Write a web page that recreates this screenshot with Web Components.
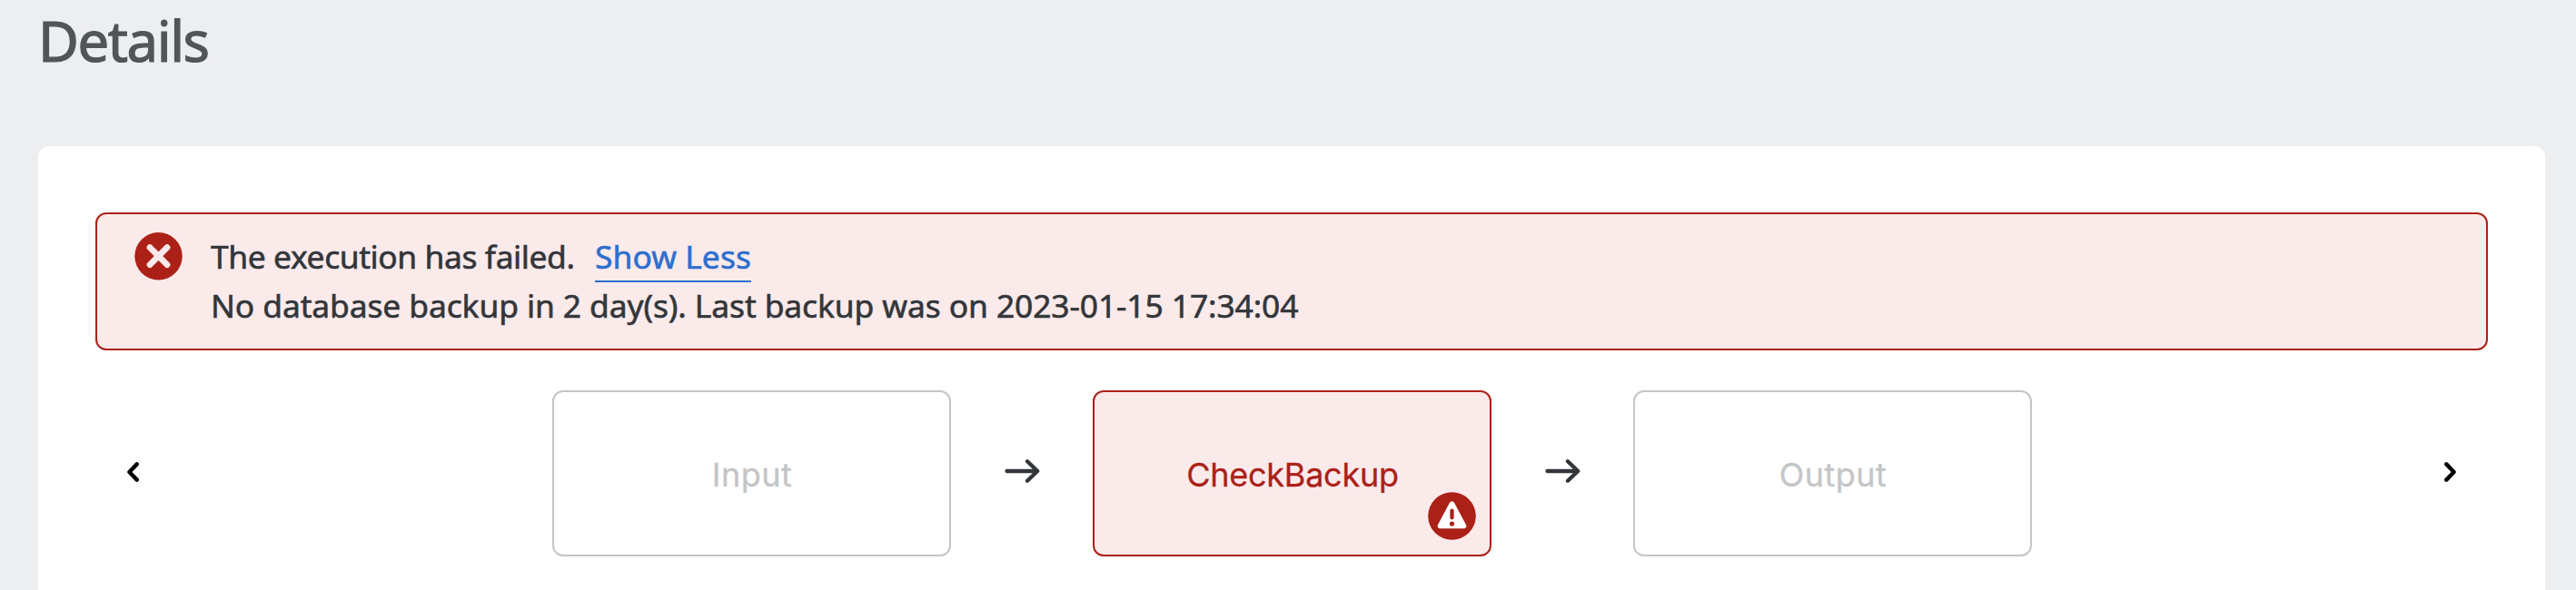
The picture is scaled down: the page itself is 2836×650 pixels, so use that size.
<!DOCTYPE html>
<html lang="en"><head><meta charset="utf-8"><title>Details</title>
<style>
html,body{margin:0;height:100%}
body{background:#edeef0;font-family:"Noto Sans","Open Sans",sans-serif;color:#32363a;overflow:hidden}
</style></head>
<body>
<details-page heading="Details">
  <message-strip>
    The execution has failed.
    <text-link slot="link">Show Less</text-link>
    <span slot="detail">No database backup in 2 day(s). Last backup was on 2023-01-15 17:34:04</span>
  </message-strip>
  <step-flow>
    <flow-step style="--track:.45px">Input</flow-step>
    <flow-arrow></flow-arrow>
    <flow-step state="error" style="--track:-.25px">CheckBackup</flow-step>
    <flow-arrow></flow-arrow>
    <flow-step style="--track:.5px">Output</flow-step>
  </step-flow>
</details-page>
<script>
const define = (name, html, setup) => customElements.define(name, class extends HTMLElement {
  constructor() {
    super();
    this.attachShadow({mode: 'open'}).innerHTML = html;
  }
  connectedCallback() { if (setup) setup(this, this.shadowRoot); }
});

define('text-link', `
<style>
:host{display:block;width:172px;color:#2d6fce;border-bottom:2px solid currentColor;letter-spacing:.05px;box-sizing:border-box;height:56px;line-height:54px;white-space:nowrap}
</style><slot></slot>`);

define('message-strip', `
<style>
:host{display:flex;box-sizing:border-box;height:152px;border:2px solid #ab2117;border-radius:12px;background:#fbeaea;padding:19px 42px 0 42px;font-size:35.4px;line-height:54px;white-space:nowrap;-webkit-text-stroke:.6px currentColor}
svg{display:block;flex:none;width:53px;height:53px;margin:1px 31px 0 -1px}
.first{display:flex;height:54px}
.title{width:423px;letter-spacing:-.4px}
.detail{letter-spacing:-.1px}
</style>
<svg viewBox="0 0 53 53"><circle cx="26.5" cy="26.2" r="26.2" fill="#ab2117"/><path d="M17 16.7 36 35.7M36 16.7 17 35.7" stroke="#fbeaea" stroke-width="6.8" stroke-linecap="round"/></svg>
<div><div class="first"><div class="title"><slot></slot></div><slot name="link"></slot></div>
<div class="detail"><slot name="detail"></slot></div></div>`);

define('flow-arrow', `
<style>:host{display:block;width:156px;flex:none}svg{display:block;margin:-5px auto 0}</style>
<svg width="40" height="30" viewBox="0 0 40 30"><path d="M3.5 15H37M26 4.2 37.2 15 26 25.8" fill="none" stroke="#32363a" stroke-width="4.3" stroke-linecap="round" stroke-linejoin="round"/></svg>`);

define('flow-step', `
<style>
:host{display:flex;align-items:center;justify-content:center;position:relative;flex:none;box-sizing:border-box;width:439px;height:183px;border:2px solid #c4c5c6;border-radius:12px;padding:3px 0 0 2px;background:#fff;color:#c4c5c6;font:36px Inter,sans-serif;letter-spacing:var(--track,0);-webkit-text-stroke:.3px currentColor}
:host([state=error]){border-color:#ab2117;background:#fbeaea;color:#ab2117}
svg{display:none;position:absolute;right:15px;bottom:16px}
:host([state=error]) svg{display:block}
</style><span><slot></slot></span>
<svg width="53" height="53" viewBox="0 0 53 53"><circle cx="26.5" cy="26.5" r="26.3" fill="#ab2117"/><path d="M26.5 13.5 39.3 37.3H13.7Z" fill="#fff" stroke="#fff" stroke-width="6" stroke-linejoin="round"/><path d="M26.5 20.5V28.3" stroke="#ab2117" stroke-width="4.2" stroke-linecap="round"/><circle cx="26.5" cy="35" r="2.6" fill="#ab2117"/></svg>`);

define('step-flow', `
<style>
:host{display:flex;align-items:center;justify-content:space-between;height:183px;margin-top:44px;padding:0 35px}
.steps{display:flex;align-items:center}
.nav{display:block;flex:none;margin-top:-3px}
</style>
<svg class="nav" width="13" height="22" viewBox="0 0 13 22"><path d="M10.7 2.4 2.4 11 10.7 19.6" fill="none" stroke="#000" stroke-width="4.4" stroke-linecap="round" stroke-linejoin="round"/></svg>
<div class="steps"><slot></slot></div>
<svg class="nav" width="13" height="22" viewBox="0 0 13 22"><path d="M2.3 2.4 10.6 11 2.3 19.6" fill="none" stroke="#000" stroke-width="4.4" stroke-linecap="round" stroke-linejoin="round"/></svg>`);

define('details-page', `
<style>
:host{display:flex;flex-direction:column;height:650px;padding:0 34px 0 42px;box-sizing:border-box}
h1{margin:0;height:161px;flex:none;font-size:61.5px;font-weight:400;line-height:88px;color:#51555a;letter-spacing:-1.4px;-webkit-text-stroke:1.2px currentColor}
main{flex:1;background:#fff;border-radius:12px 12px 0 0;padding:73px 63px 0}
</style>
<h1></h1><main><slot></slot></main>`, (el, root) => {
  root.querySelector('h1').textContent = el.getAttribute('heading');
});
</script>
</body></html>
